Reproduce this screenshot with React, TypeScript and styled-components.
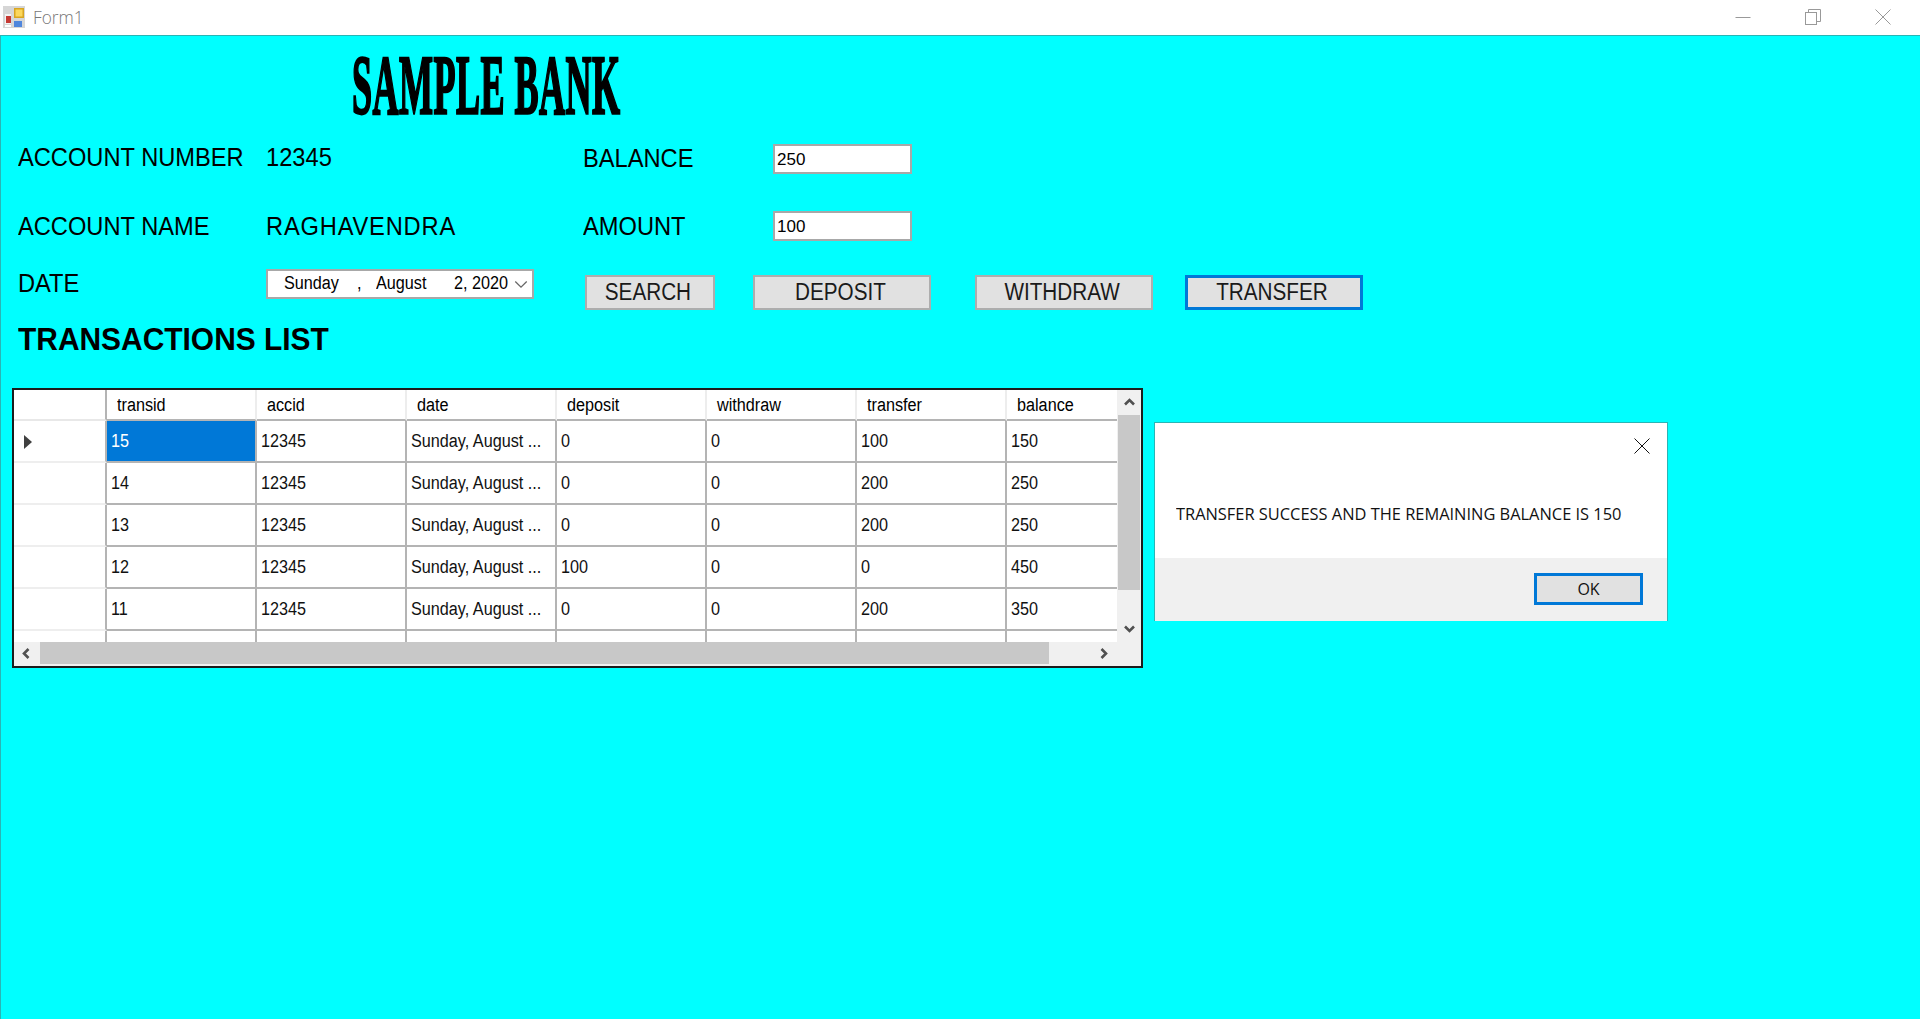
import React from "react";
import styled, { createGlobalStyle } from "styled-components";

type Transaction = {
  transid: string;
  accid: string;
  date: string;
  deposit: string;
  withdraw: string;
  transfer: string;
  balance: string;
};

const columns = ["transid", "accid", "date", "deposit", "withdraw", "transfer", "balance"];

const transactions: Array<Transaction> = [
  { transid: "15", accid: "12345", date: "Sunday, August ...", deposit: "0", withdraw: "0", transfer: "100", balance: "150" },
  { transid: "14", accid: "12345", date: "Sunday, August ...", deposit: "0", withdraw: "0", transfer: "200", balance: "250" },
  { transid: "13", accid: "12345", date: "Sunday, August ...", deposit: "0", withdraw: "0", transfer: "200", balance: "250" },
  { transid: "12", accid: "12345", date: "Sunday, August ...", deposit: "100", withdraw: "0", transfer: "0", balance: "450" },
  { transid: "11", accid: "12345", date: "Sunday, August ...", deposit: "0", withdraw: "0", transfer: "200", balance: "350" },
  { transid: "", accid: "", date: "", deposit: "", withdraw: "", transfer: "", balance: "" }
];

const GlobalStyle = createGlobalStyle`
  html, body {
    margin: 0;
    padding: 0;
    background: #00ffff;
    overflow: hidden;
  }
  * {
    box-sizing: border-box;
  }
`;

const Window = styled.div`
  width: 1920px;
  height: 1019px;
  display: flex;
  flex-direction: column;
  font-family: "Liberation Sans", Arial, sans-serif;
  color: #000;
`;

const TitleBar = styled.header`
  height: 36px;
  flex: none;
  display: flex;
  align-items: center;
  background: #fff;
  border-bottom: 1px solid #2ab5b5;
  padding: 0 0 1px 3px;
`;

const FormCaption = styled.span`
  margin-left: 8px;
  font-family: "Open Sans", sans-serif;
  font-weight: 300;
  font-size: 18px;
  color: #777;
  display: inline-block;
  transform: scaleX(0.96);
  transform-origin: left center;
`;

const WindowButtons = styled.div`
  margin-left: auto;
  display: flex;
  align-items: center;
  padding-right: 29px;
  gap: 54px;
  margin-top: -1px;
`;

const Content = styled.main`
  flex: 1;
  position: relative;
  background: #00ffff;
  border-left: 1px solid #2ab5b5;
  padding-left: 17px;
`;

const BankName = styled.h1`
  margin: 0;
  height: 89px;
  padding-left: 334px;
  padding-top: 21px;
  font-family: "Liberation Serif", serif;
  font-weight: 700;
  font-size: 84px;
  line-height: 58px;
  white-space: nowrap;
  -webkit-text-stroke: 2.5px #000;
  letter-spacing: 1px;
  transform: scaleX(0.43);
  transform-origin: 334px 0;
`;

const FormGrid = styled.section`
  display: grid;
  grid-template-columns: 248px 317px 190px 1fr;
  grid-template-rows: 66px 70px 45px;
  align-items: center;
`;

const FieldText = styled.span<{ $spacing?: number; $raise?: number }>`
  display: inline-block;
  font-size: 26px;
  line-height: 30px;
  white-space: nowrap;
  letter-spacing: ${(props) => props.$spacing || 0}px;
  margin-bottom: ${(props) => props.$raise || 0}px;
  transform: scaleX(0.91);
  transform-origin: left center;
`;

const TextBoxCell = styled.div<{ $drop?: number }>`
  display: flex;
  margin-top: ${(props) => props.$drop || 0}px;
`;

const TextBox = styled.input`
  width: 139px;
  height: 30px;
  padding: 1px 2px 0;
  background: #fff;
  border: 2px solid #a8a8a8;
  outline: none;
  font-family: "Liberation Sans", Arial, sans-serif;
  font-size: 17px;
  color: #000;
`;

const DatePicker = styled.div`
  width: 268px;
  height: 30px;
  display: flex;
  align-items: center;
  background: #fff;
  border: 2px solid #a8a8a8;
  font-size: 18px;
`;

const DatePart = styled.span<{ $width: number }>`
  display: inline-block;
  width: ${(props) => props.$width}px;
  white-space: nowrap;
  transform: scaleX(0.9);
  transform-origin: left center;
`;

const ButtonRow = styled.div`
  grid-column: 3 / 5;
  display: flex;
  align-items: center;
  padding-left: 2px;
  padding-top: 17px;
`;

const PushButton = styled.button<{ $width: number; $gap?: number; $focused?: boolean }>`
  width: ${(props) => props.$width}px;
  height: 35px;
  margin-left: ${(props) => props.$gap || 0}px;
  padding: 0;
  background: #e1e1e1;
  border: ${(props) => (props.$focused ? "3px solid #0078d7" : "2px solid #adadad")};
  font-family: "Liberation Sans", Arial, sans-serif;
  font-size: 23px;
  color: #1a1a1a;
  & span {
    display: inline-block;
    transform: translateX(-2px) scaleX(0.9);
  }
`;

const SectionTitle = styled.h2`
  margin: 0;
  height: 82px;
  padding-top: 15px;
  font-size: 32px;
  line-height: 36px;
  font-weight: 700;
  white-space: nowrap;
  transform: scaleX(0.935);
  transform-origin: left top;
`;

const DataGrid = styled.section`
  width: 1131px;
  height: 280px;
  margin-left: -6px;
  display: flex;
  flex-direction: column;
  background: #f0f0f0;
  border: 2px solid #1c1c1c;
`;

const GridBody = styled.div`
  height: 252px;
  flex: none;
  display: flex;
`;

const Viewport = styled.div`
  width: 1103px;
  overflow: hidden;
  background: #fff;
`;

const GridRow = styled.div`
  display: flex;
  width: 1143px;
`;

const HeaderCell = styled.div`
  width: 150px;
  height: 31px;
  flex: none;
  display: flex;
  align-items: center;
  padding: 2px 0 0 10px;
  border-right: 2px solid #ededed;
  border-bottom: 2px solid #b4b4b4;
  font-size: 18px;
`;

const CornerCell = styled(HeaderCell)`
  width: 93px;
  padding: 0;
  border-right: 2px solid #b4b4b4;
  border-bottom-color: #e8e8e8;
`;

const RowHeader = styled.div`
  width: 93px;
  height: 42px;
  flex: none;
  display: flex;
  align-items: center;
  padding: 2px 0 0 10px;
  background: #fff;
  border-right: 2px solid #b4b4b4;
  border-bottom: 2px solid #eeeeee;
`;

const DataCell = styled.div<{ $selected?: boolean }>`
  width: 150px;
  height: 42px;
  flex: none;
  display: flex;
  align-items: center;
  padding-left: 4px;
  background: ${(props) => (props.$selected ? "#0078d7" : "#fff")};
  color: ${(props) => (props.$selected ? "#fff" : "#111")};
  border-right: 2px solid #b4b4b4;
  border-bottom: 2px solid #b4b4b4;
  font-size: 18px;
  white-space: nowrap;
`;

const CellText = styled.span`
  display: inline-block;
  white-space: nowrap;
  transform: scaleX(0.9);
  transform-origin: left center;
`;

const VerticalBar = styled.div`
  width: 24px;
  flex: none;
  display: flex;
  flex-direction: column;
  align-items: center;
  background: #f0f0f0;
`;

const VerticalThumb = styled.div`
  width: 22px;
  height: 175px;
  flex: none;
  background: #c8c8c8;
`;

const ArrowBox = styled.div<{ $height?: number; $width?: number }>`
  width: ${(props) => (props.$width ? props.$width + "px" : "100%")};
  height: ${(props) => (props.$height ? props.$height + "px" : "100%")};
  flex: none;
  display: flex;
  align-items: center;
  justify-content: center;
`;

const BottomArrowBox = styled(ArrowBox)`
  align-items: flex-end;
  padding-bottom: 8px;
`;

const HorizontalBar = styled.div`
  flex: 1;
  display: flex;
  align-items: center;
  background: #f0f0f0;
  padding-bottom: 2px;
`;

const HorizontalThumb = styled.div`
  width: 1009px;
  height: 100%;
  flex: none;
  background: #c8c8c8;
`;

const MessageBox = styled.aside`
  position: absolute;
  left: 1153px;
  top: 386px;
  width: 514px;
  height: 199px;
  display: flex;
  flex-direction: column;
  background: #fff;
  border: 1px solid #2ab5b5;
  border-bottom: none;
`;

const MessageClose = styled.div`
  position: absolute;
  right: 17px;
  top: 15px;
  line-height: 0;
`;

const MessageBody = styled.div`
  height: 135px;
  flex: none;
  padding: 80px 0 0 21px;
  font-family: "Open Sans", sans-serif;
  font-size: 16px;
  line-height: 22px;
  color: #111;
  white-space: nowrap;
  & span {
    display: inline-block;
    transform: scaleX(1.025);
    transform-origin: left center;
  }
`;

const MessageFooter = styled.div`
  flex: 1;
  display: flex;
  justify-content: flex-end;
  background: #f0f0f0;
  padding: 15px 24px 0 0;
`;

const OkButton = styled.button`
  width: 109px;
  height: 32px;
  padding: 0;
  background: #e1e1e1;
  border: 3px solid #0078d7;
  font-family: "Open Sans", sans-serif;
  font-size: 16px;
  color: #111;
`;

const AppIcon: React.FC = () => (
  <svg width="22" height="22" viewBox="0 0 22 22">
    <rect x="0" y="0" width="22" height="22" fill="#d6d6d6" />
    <rect x="2" y="8" width="6" height="10" fill="#f4f4f4" />
    <rect x="3" y="10" width="5" height="7" fill="#c63a34" />
    <rect x="11" y="2" width="10" height="10" fill="#d8a520" />
    <rect x="12.5" y="3.5" width="7" height="7" fill="#fbd75c" />
    <rect x="11" y="15" width="8" height="6" fill="#4f86dc" />
    <rect x="2" y="19" width="6" height="2" fill="#fff" />
  </svg>
);

const WindowGlyph: React.FC<{ kind: "min" | "restore" | "close" }> = ({ kind }) => (
  <svg width="16" height="16" viewBox="0 0 16 16" fill="none" stroke="#999" strokeWidth="1">
    {kind === "min" && <path d="M0.5 8.5H15.5" />}
    {kind === "restore" && (
      <>
        <rect x="0.5" y="3.5" width="11" height="12" />
        <path d="M3.5 3.5V0.5H15.5V12.5H11.5" />
      </>
    )}
    {kind === "close" && <path d="M0.5 0.5L15.5 15.5M15.5 0.5L0.5 15.5" />}
  </svg>
);

const Chevron: React.FC<{ dir: "up" | "down" | "left" | "right"; color?: string; width?: number; size?: number }> = ({ dir, color = "#505050", width = 2.6, size = 11 }) => {
  const paths = {
    up: "M1 7.5L5.5 3L10 7.5",
    down: "M1 3.5L5.5 8L10 3.5",
    left: "M6.5 1L2 5.5L6.5 10",
    right: "M2.5 1L7 5.5L2.5 10"
  };
  return (
    <svg width={size} height={size} viewBox="0 0 11 11" fill="none" stroke={color} strokeWidth={width}>
      <path d={paths[dir]} />
    </svg>
  );
};

const RowMarker: React.FC = () => (
  <svg width="8" height="14" viewBox="0 0 8 14">
    <path d="M0 0L8 7L0 14Z" fill="#404040" />
  </svg>
);

const App: React.FC = () => {
  return (
    <Window>
      <GlobalStyle />
      <TitleBar>
        <AppIcon />
        <FormCaption>Form1</FormCaption>
        <WindowButtons>
          <WindowGlyph kind="min" />
          <WindowGlyph kind="restore" />
          <WindowGlyph kind="close" />
        </WindowButtons>
      </TitleBar>
      <Content>
        <BankName>SAMPLE BANK</BankName>
        <FormGrid>
          <FieldText $raise={3}>ACCOUNT NUMBER</FieldText>
          <FieldText $raise={3}>12345</FieldText>
          <FieldText>BALANCE</FieldText>
          <TextBoxCell $drop={2}><TextBox readOnly value="250" /></TextBoxCell>

          <FieldText>ACCOUNT NAME</FieldText>
          <FieldText $spacing={0.9}>RAGHAVENDRA</FieldText>
          <FieldText>AMOUNT</FieldText>
          <TextBoxCell><TextBox readOnly value="100" /></TextBoxCell>

          <FieldText $raise={2}>DATE</FieldText>
          <DatePicker>
            <DatePart $width={16} />
            <DatePart $width={73}>Sunday</DatePart>
            <DatePart $width={19}>,</DatePart>
            <DatePart $width={78}>August</DatePart>
            <DatePart $width={60}>2, 2020</DatePart>
            <Chevron dir="down" color="#666" width={1} size={14} />
          </DatePicker>
          <ButtonRow>
            <PushButton $width={130}><span>SEARCH</span></PushButton>
            <PushButton $width={178} $gap={38}><span>DEPOSIT</span></PushButton>
            <PushButton $width={178} $gap={44}><span>WITHDRAW</span></PushButton>
            <PushButton $width={178} $gap={32} $focused><span>TRANSFER</span></PushButton>
          </ButtonRow>
        </FormGrid>
        <SectionTitle>TRANSACTIONS LIST</SectionTitle>
        <DataGrid>
          <GridBody>
            <Viewport>
              <GridRow>
                <CornerCell />
                {columns.map((c) => (
                  <HeaderCell key={c}><CellText>{c}</CellText></HeaderCell>
                ))}
              </GridRow>
              {transactions.map((t, idx) => (
                <GridRow key={idx}>
                  <RowHeader>{idx === 0 ? <RowMarker /> : null}</RowHeader>
                  <DataCell $selected={idx === 0}><CellText>{t.transid}</CellText></DataCell>
                  <DataCell><CellText>{t.accid}</CellText></DataCell>
                  <DataCell><CellText>{t.date}</CellText></DataCell>
                  <DataCell><CellText>{t.deposit}</CellText></DataCell>
                  <DataCell><CellText>{t.withdraw}</CellText></DataCell>
                  <DataCell><CellText>{t.transfer}</CellText></DataCell>
                  <DataCell><CellText>{t.balance}</CellText></DataCell>
                </GridRow>
              ))}
            </Viewport>
            <VerticalBar>
              <ArrowBox $height={25}><Chevron dir="up" /></ArrowBox>
              <VerticalThumb />
              <BottomArrowBox $height={52}><Chevron dir="down" /></BottomArrowBox>
            </VerticalBar>
          </GridBody>
          <HorizontalBar>
            <ArrowBox $width={26}><Chevron dir="left" /></ArrowBox>
            <HorizontalThumb />
            <ArrowBox $width={110}><Chevron dir="right" /></ArrowBox>
          </HorizontalBar>
        </DataGrid>
        <MessageBox>
          <MessageClose>
            <svg width="16" height="16" viewBox="0 0 16 16" fill="none" stroke="#111" strokeWidth="1">
              <path d="M0.5 0.5L15.5 15.5M15.5 0.5L0.5 15.5" />
            </svg>
          </MessageClose>
          <MessageBody><span>TRANSFER SUCCESS AND THE REMAINING BALANCE IS 150</span></MessageBody>
          <MessageFooter>
            <OkButton>OK</OkButton>
          </MessageFooter>
        </MessageBox>
      </Content>
    </Window>
  );
};

export default App;
